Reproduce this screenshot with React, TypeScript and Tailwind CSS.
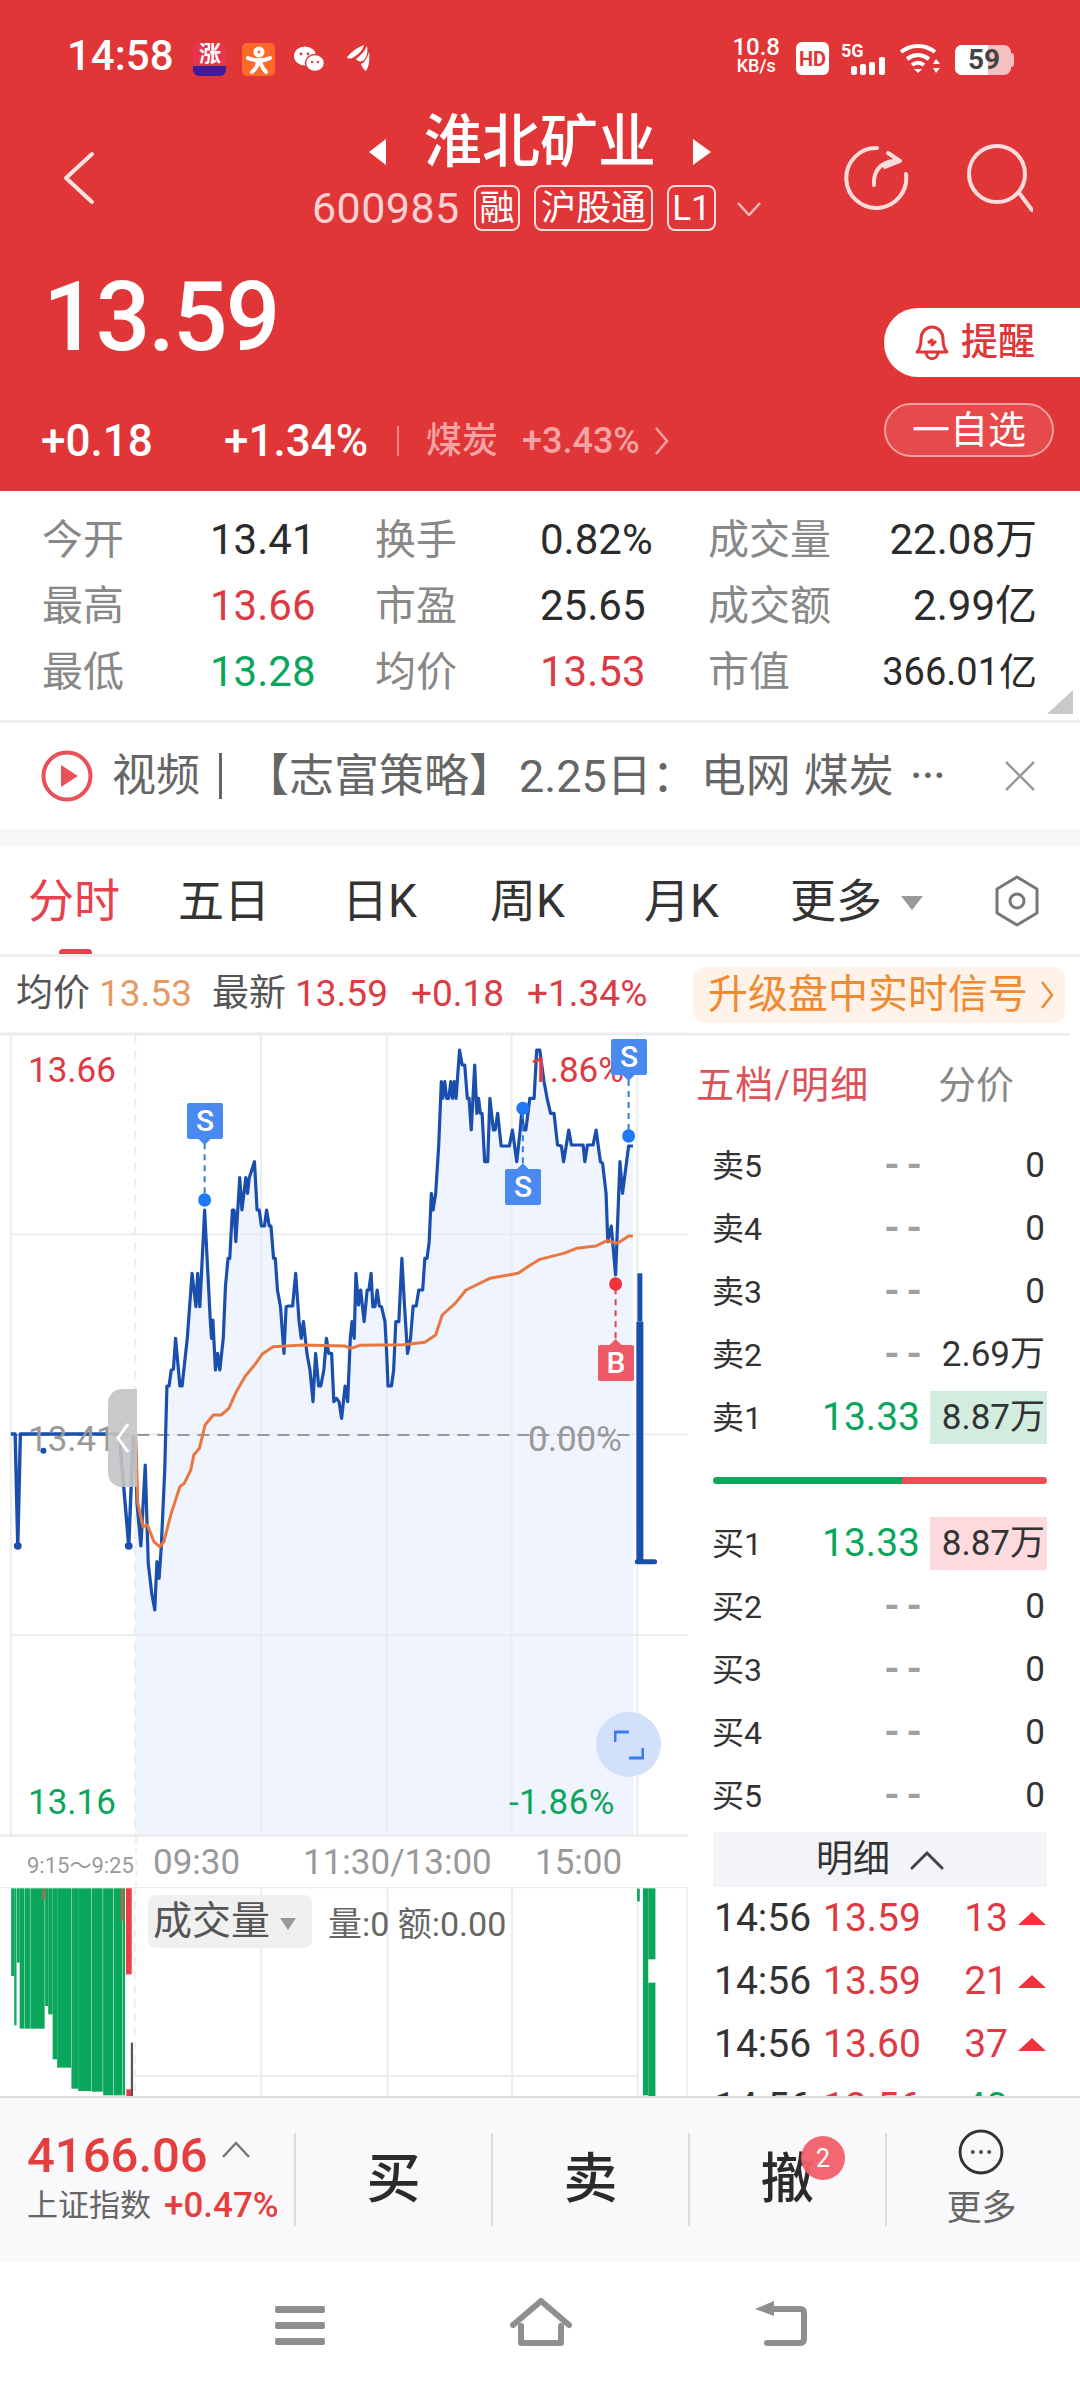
const RED = "text-[#dd3a44]";
const GREEN = "text-[#0aa65c]";

// price and average series, in chart units (1587 x 2412 maps to 688 x 804 px)
const preMarket =
  "25,1212 35,1212 41,1548 47,1212 275,1212 297,1548 303,1355 308,1215";
const pricePoints =
  "312,1215 316,1420 325,1548 335,1305 342,1600 350,1690 357,1740 362,1595 367,1645 372,1550 380,1320 385,1068 390,1068 395,1020 400,1018 405,925 415,1068 420,1068 432,925 443,730 452,830 456,730 461,830 472,540 485,870 488,925 491,870 497,1020 502,970 507,1020 515,925 520,770 526,685 530,685 536,540 540,540 544,635 553,443 558,540 567,443 571,490 575,443 587,395 593,540 598,540 603,588 610,588 615,540 621,588 625,588 631,685 635,685 640,780 647,830 655,970 660,830 665,828 675,828 682,730 690,875 695,925 700,875 708,970 715,1020 722,1115 728,970 735,1068 740,1068 747,1020 753,925 758,970 765,970 770,1115 776,1105 782,1115 788,1165 796,1068 802,1115 808,925 812,875 817,925 821,730 827,825 832,780 840,875 847,780 851,780 856,730 860,830 865,830 870,780 875,828 880,830 888,875 892,970 895,1068 903,1068 908,1020 913,875 920,875 927,685 933,825 940,970 947,925 953,828 960,828 966,780 975,780 980,685 985,685 990,635 995,490 999,540 1005,490 1012,345 1018,155 1021,205 1026,155 1030,205 1035,205 1040,155 1044,205 1048,155 1052,205 1060,60 1066,105 1072,105 1078,205 1082,205 1087,300 1095,105 1100,250 1104,205 1108,250 1112,250 1118,395 1125,395 1130,205 1138,300 1142,300 1148,250 1156,348 1175,348 1182,300 1192,395 1200,300 1203,250 1208,300 1213,300 1222,205 1232,205 1238,60 1245,60 1255,155 1262,205 1270,250 1278,250 1286,345 1295,348 1300,395 1312,300 1318,345 1345,345 1349,395 1355,345 1368,345 1375,300 1385,395 1390,400 1398,490 1402,635 1410,588 1420,735 1430,395 1436,490 1450,348 1460,348";
const avgPoints =
  "313,1215 318,1420 330,1490 340,1485 355,1535 368,1550 378,1535 395,1450 415,1370 425,1360 440,1320 447,1275 460,1255 473,1185 492,1155 510,1155 528,1135 545,1085 565,1040 590,1000 605,972 630,950 700,945 795,948 810,955 830,946 930,944 980,937 1005,915 1020,855 1050,820 1075,780 1130,745 1195,730 1220,708 1245,688 1300,670 1330,655 1375,648 1400,632 1425,640 1450,618 1460,618";

const volumeBars = [
  [25, 32, 410], [32, 37, 558], [38, 44, 370], [44, 55, 568], [56, 67, 568], [68, 100, 568],
  [101, 108, 500], [108, 118, 525], [118, 128, 660], [128, 159, 685], [160, 175, 748],
  [175, 204, 755], [205, 230, 757], [231, 254, 768], [255, 274, 768], [275, 280, 768],
  [1440, 1452, 768], [1452, 1468, 360],
];

const depthSell = [
  { label: "卖5", vol: "0" },
  { label: "卖4", vol: "0" },
  { label: "卖3", vol: "0" },
  { label: "卖2", vol: "2.69万" },
];
const depthBuy = [
  { label: "买2", vol: "0" },
  { label: "买3", vol: "0" },
  { label: "买4", vol: "0" },
  { label: "买5", vol: "0" },
];
const ticks = [
  { time: "14:56", price: "13.59", qty: "13", up: true },
  { time: "14:56", price: "13.59", qty: "21", up: true },
  { time: "14:56", price: "13.60", qty: "37", up: true },
  { time: "14:56", price: "13.56", qty: "40", up: false },
];

const StatusBar = () => (
  <div className="flex h-[110px] items-start pt-[37px] text-white">
    <span className="ml-[67px] w-[126px] text-[42px] leading-[38px] font-medium">14:58</span>
    <div className="relative mt-[6px] h-[33px] w-[33px] overflow-hidden rounded-[6px] bg-[#e8344e]">
      <span className="absolute left-[6px] top-[-2px] text-[22px] leading-[26px] font-bold">涨</span>
      <div className="absolute bottom-0 h-[10px] w-full bg-[#3a1f9a]" />
    </div>
    <div className="mt-[6px] ml-[16px] flex h-[33px] w-[33px] items-center justify-center rounded-[5px] bg-[#ff6a2b]">
      <svg width="26" height="28" viewBox="0 0 26 28" fill="none" stroke="white" strokeWidth="4" strokeLinecap="round">
        <circle cx="13" cy="6" r="3.5" />
        <path d="M2 12c5 3 17 3 22 0M12 14c0 6-2 9-6 12M14 14c1 6 3 9 6 12" />
      </svg>
    </div>
    <svg className="mt-[9px] ml-[18px]" width="32" height="28" viewBox="0 0 32 28" fill="white">
      <ellipse cx="12" cy="10" rx="11" ry="9.5" />
      <ellipse cx="22" cy="17" rx="9.5" ry="8.5" stroke="#e03638" strokeWidth="1.5" />
      <circle cx="8" cy="8" r="1.4" fill="#e03638" />
      <circle cx="15" cy="8" r="1.4" fill="#e03638" />
      <circle cx="19" cy="16" r="1.2" fill="#e03638" />
      <circle cx="25" cy="16" r="1.2" fill="#e03638" />
    </svg>
    <svg className="mt-[5px] ml-[21px]" width="25" height="30" viewBox="0 0 25 30" fill="white">
      <path d="M1 15C6 9 12 5 18 3c-1 5-5 9-10 12-3 2-6 2-7 0z" />
      <path d="M10 17c4-3 8-7 11-13 1 6 0 10-3 14-2 2-6 2-8-1z" />
      <path d="M15 22c3-1 6-5 8-12 1 7 0 14-3 19-2-1-4-4-5-7z" />
    </svg>

    <div className="ml-auto flex flex-col items-center font-medium">
      <span className="text-[24px] leading-[20px]">10.8</span>
      <span className="text-[18px] leading-[18px]">KB/s</span>
    </div>
    <div className="mt-[5px] ml-[16px] flex h-[33px] w-[33px] items-center justify-center rounded-[6px] bg-white text-[20px] font-bold text-[#e03638]">
      HD
    </div>
    <svg className="mt-[5px] ml-[12px]" width="46" height="36" viewBox="0 0 46 36" fill="white">
      <text x="0" y="15" fontSize="18" fontWeight="700" fontFamily="Roboto, sans-serif">5G</text>
      <rect x="10" y="24" width="6" height="9" rx="2" />
      <rect x="19" y="22" width="6" height="11" rx="2" />
      <rect x="28" y="20" width="6" height="13" rx="2" />
      <rect x="38" y="15" width="6" height="18" rx="2" />
    </svg>
    <svg className="mt-[6px] ml-[13px]" width="42" height="32" viewBox="0 0 42 32" fill="none" stroke="white" strokeWidth="4">
      <path d="M1 9c10-8 24-8 34 0M7 16c7-5 15-5 22 0M12 22c4-3 8-3 12 0" />
      <path d="M18 30l-4-4h8z" fill="white" stroke="none" />
      <path d="M36 16l-3 5h7zM36 30l-3-5h7z" fill="white" stroke="none" />
    </svg>
    <div className="relative mt-[8px] ml-[13px] flex h-[30px] w-[56px] overflow-hidden rounded-[7px] bg-[#f6bfc0]">
      <div className="h-full w-[33px] bg-white" />
      <span className="absolute left-[13px] top-[-2px] text-[28px] leading-[34px] font-bold text-[#444]">59</span>
    </div>
    <div className="mt-[16px] mr-[66px] h-[14px] w-[3px] rounded-r bg-[#f6bfc0]" />
  </div>
);

const Tag = ({ children, className = "" }: any) => (
  <div className={`flex h-[46px] items-center justify-center rounded-[8px] border-2 border-[#fbdcdc] text-[35px] leading-none whitespace-nowrap text-white ${className}`}>
    {children}
  </div>
);

const Header = () => (
  <div className="h-[491px] bg-[#e03638] text-white">
    <StatusBar />
    <div className="flex h-[130px] items-start">
      <svg className="mt-[41px] ml-[62px]" width="33" height="54" viewBox="0 0 33 54" fill="none" stroke="#fbe3e3" strokeWidth="4" strokeLinecap="round" strokeLinejoin="round">
        <path d="M30 3 4 27l26 24" />
      </svg>
      <div className="ml-[217px] flex flex-col">
        <div className="mt-[6px] flex h-[52px] items-center pl-[56px]">
          <svg className="mt-[20px]" width="20" height="26" viewBox="0 0 20 26" fill="white"><path d="M18 0v26L1 13z" /></svg>
          <span className="ml-[36px] w-[268px] text-[58px] leading-[52px] font-medium whitespace-nowrap">淮北矿业</span>
          <svg className="mt-[20px]" width="20" height="26" viewBox="0 0 20 26" fill="white"><path d="M1 0v26l18-13z" /></svg>
        </div>
        <div className="mt-[17px] flex items-center">
          <span className="w-[162px] text-[43px] leading-[46px] tracking-[0.01em] text-[#fbd0d0]">600985</span>
          <Tag className="w-[46px]">融</Tag>
          <Tag className="ml-[14px] w-[119px]">沪股通</Tag>
          <Tag className="ml-[14px] w-[49px]">L1</Tag>
          <svg className="mt-[2px] ml-[21px]" width="24" height="14" viewBox="0 0 24 14" fill="none" stroke="#f6b9b9" strokeWidth="2.5"><path d="M1 1l11 12L23 1" /></svg>
        </div>
      </div>
      <svg className="mt-[34px] ml-auto" width="66" height="68" viewBox="0 0 66 68" fill="none" stroke="#fbdcdc" strokeWidth="4" strokeLinecap="round">
        <path d="M34 4a30 30 0 1 0 29 26" />
        <path d="M31 41c-1-13 6-23 20-24M45 9l12 8-15 6" strokeLinejoin="round" />
      </svg>
      <svg className="mt-[34px] mr-[47px] ml-[58px]" width="66" height="68" viewBox="0 0 66 68" fill="none" stroke="#fbdcdc" strokeWidth="4" strokeLinecap="round">
        <circle cx="30" cy="30" r="28" />
        <path d="M53 50l12 16" />
      </svg>
    </div>
    <div className="flex">
      <div className="flex-1">
        <div className="mt-[28px] h-[98px] pl-[43px] text-[96px] leading-[98px] font-medium tracking-[-0.02em]">13.59</div>
        <div className="mt-[53px] flex h-[44px] items-center pl-[41px] text-[44px] leading-none font-medium">
          <span className="w-[183px]">+0.18</span>
          <span className="w-[173px]">+1.34%</span>
          <div className="h-[30px] w-[2px] bg-[#ec8486]" />
          <span className="ml-[27px] w-[96px] text-[36px] text-[#f7a3a3]">煤炭</span>
          <span className="w-[132px] text-[36px] text-[#f7a3a3]">+3.43%</span>
          <svg width="16" height="30" viewBox="0 0 16 30" fill="none" stroke="#f7a3a3" strokeWidth="2.5"><path d="M2 2l11 13L2 28" /></svg>
        </div>
      </div>
      <div className="flex w-[196px] flex-col">
        <div className="mt-[68px] flex h-[69px] items-center rounded-l-[34px] bg-white pl-[30px] text-[37px] font-medium text-[#e03638]">
          <svg width="36" height="38" viewBox="0 0 36 38" fill="none" stroke="#e03638" strokeWidth="3" strokeLinejoin="round">
            <path d="M3 28c3-3 4-6 4-13 0-7 5-12 11-12s11 5 11 12c0 7 1 10 4 13z" />
            <path d="M12 28c0 9 12 9 12 0M14 19l4-3v5l4-4" />
          </svg>
          <span className="ml-[11px]">提醒</span>
        </div>
        <div className="mt-[26px] flex h-[54px] w-[170px] items-center justify-center rounded-[27px] border-2 border-[#f2a0a2] bg-[#e64a4c] text-[38px] leading-none">
          一自选
        </div>
      </div>
    </div>
  </div>
);

const StatsGrid = () => {
  const labelCls = "text-[41px] text-[#888888]";
  const valueCls = "text-[42px] text-[#2b2b2b]";
  return (
    <div className="relative h-[232px] border-b-[3px] border-[#eeeeee] pt-[16px] pl-[42px]">
      <div className="grid grid-cols-[168px_165px_165px_168px_160px_169px] auto-rows-[66px] items-center leading-none">
        <span className={labelCls}>今开</span>
        <span className={valueCls}>13.41</span>
        <span className={labelCls}>换手</span>
        <span className={valueCls}>0.82%</span>
        <span className={`${labelCls} whitespace-nowrap`}>成交量</span>
        <span className={`${valueCls} text-right whitespace-nowrap`}>22.08万</span>
        <span className={labelCls}>最高</span>
        <span className={`text-[42px] ${RED}`}>13.66</span>
        <span className={labelCls}>市盈</span>
        <span className={valueCls}>25.65</span>
        <span className={`${labelCls} whitespace-nowrap`}>成交额</span>
        <span className={`${valueCls} text-right whitespace-nowrap`}>2.99亿</span>
        <span className={labelCls}>最低</span>
        <span className={`text-[42px] ${GREEN}`}>13.28</span>
        <span className={labelCls}>均价</span>
        <span className={`text-[42px] ${RED}`}>13.53</span>
        <span className={labelCls}>市值</span>
        <span className="text-right text-[38px] whitespace-nowrap text-[#2b2b2b]">366.01亿</span>
      </div>
      <div className="absolute right-[7px] bottom-[6px] h-0 w-0 border-b-[24px] border-l-[26px] border-b-[#c9c9c9] border-l-transparent" />
    </div>
  );
};

const NewsTicker = () => (
  <div className="flex h-[106px] items-center pl-[41px] text-[44px] leading-none text-[#666666]">
    <svg width="52" height="52" viewBox="0 0 52 52" fill="none">
      <circle cx="26" cy="26" r="23.5" stroke="#e8505a" strokeWidth="4" />
      <path d="M20 15l17 11-17 11z" fill="#e8505a" />
    </svg>
    <span className="ml-[19px] whitespace-nowrap">视频</span>
    <div className="ml-[19px] h-[46px] w-[3px] bg-[#666666]" />
    <span className="ml-[22px] text-[45px] whitespace-nowrap">【志富策略】</span>
    <span className="ml-[5px] text-[45px] whitespace-nowrap">2.25日：</span>
    <span className="ml-[4px] text-[45px] whitespace-nowrap">电网</span>
    <span className="ml-[13px] text-[45px] whitespace-nowrap">煤炭</span>
    <span className="ml-[17px] text-[36px] font-bold tracking-[0.02em]">···</span>
    <svg className="mr-[45px] ml-auto" width="30" height="30" viewBox="0 0 30 30" fill="none" stroke="#999999" strokeWidth="2.5"><path d="M1 1l28 28M29 1 1 29" /></svg>
  </div>
);

const ChartTabs = () => (
  <div className="relative flex h-[111px] items-start border-b-[3px] border-[#eeeeee] pt-[32px] text-[46px] leading-[46px] text-[#333333]">
    <span className="ml-[28px] w-[150px] text-[#e8404c]">分时</span>
    <span className="w-[164px]">五日</span>
    <span className="w-[148px]">日K</span>
    <span className="w-[154px]">周K</span>
    <span className="w-[146px]">月K</span>
    <span>更多</span>
    <div className="mt-[18px] ml-[19px] h-0 w-0 border-x-[11px] border-t-[14px] border-x-transparent border-t-[#999999]" />
    <svg className="absolute left-[993px] top-[29px]" width="48" height="52" viewBox="0 0 48 52" fill="none" stroke="#777777" strokeWidth="3">
      <path d="M24 2 44 14v24L24 50 4 38V14z" strokeLinejoin="round" />
      <circle cx="24" cy="26" r="7" />
    </svg>
    <div className="absolute left-[59px] bottom-0 h-[5px] w-[33px] rounded-t bg-[#e8404c]" />
  </div>
);

const QuoteBar = () => (
  <div className="flex h-[73px] items-start pl-[16px] text-[37px] leading-none">
    <span className="mt-[18px] text-[#555555]">均价</span>
    <span className="mt-[18px] ml-[9px] w-[113px] text-[#e59a62]">13.53</span>
    <span className="mt-[18px] text-[#555555]">最新</span>
    <span className={`mt-[18px] ml-[9px] w-[116px] ${RED}`}>13.59</span>
    <span className={`mt-[18px] w-[116px] ${RED}`}>+0.18</span>
    <span className={`mt-[18px] w-[166px] ${RED}`}>+1.34%</span>
    <div className="mt-[10px] flex h-[56px] w-[372px] items-center rounded-[12px] bg-[#fff3e9] pl-[15px] text-[40px] text-[#f08a30]">
      <span className="whitespace-nowrap">升级盘中实时信号</span>
      <svg className="ml-[12px]" width="14" height="30" viewBox="0 0 14 30" fill="none" stroke="#f08a30" strokeWidth="2.5"><path d="M2 2l10 13L2 28" /></svg>
    </div>
  </div>
);

const Marker = ({ label, className = "" }: any) => (
  <div className={`absolute flex h-[36px] w-[36px] items-center justify-center text-[30px] leading-none font-medium text-white ${className}`}>
    {label}
  </div>
);

const AxisLabel = ({ children, className = "" }: any) => (
  <span className={`absolute text-[35px] leading-none ${className}`}>{children}</span>
);

const PriceChart = () => (
  <div className="relative h-[804px] w-[688px] overflow-hidden">
    <svg className="absolute inset-0" width="688" height="804" viewBox="0 0 1587 2412" preserveAspectRatio="none" fill="none">
      <polygon points={`${pricePoints} 1462,2412 312,2412 312,1215`} fill="#eff4fe" />
      <g stroke="#ebecf0">
        <line x1="0" y1="12" x2="1587" y2="12" strokeWidth="3" vectorEffect="non-scaling-stroke" />
        <line x1="25" y1="12" x2="25" y2="2412" strokeWidth="2" vectorEffect="non-scaling-stroke" />
        <line x1="25" y1="613" x2="1587" y2="613" strokeWidth="2" vectorEffect="non-scaling-stroke" />
        <line x1="25" y1="1815" x2="1587" y2="1815" strokeWidth="2" vectorEffect="non-scaling-stroke" />
        <line x1="25" y1="1213" x2="1587" y2="1213" strokeWidth="2" vectorEffect="non-scaling-stroke" />
        <line x1="602" y1="12" x2="602" y2="2412" strokeWidth="2" vectorEffect="non-scaling-stroke" />
        <line x1="892" y1="12" x2="892" y2="2412" strokeWidth="2" vectorEffect="non-scaling-stroke" />
        <line x1="1180" y1="12" x2="1180" y2="2412" strokeWidth="2" vectorEffect="non-scaling-stroke" />
        <line x1="1470" y1="12" x2="1470" y2="2412" strokeWidth="2" vectorEffect="non-scaling-stroke" />
        <line x1="312" y1="12" x2="312" y2="2412" strokeWidth="2" strokeDasharray="9 7" vectorEffect="non-scaling-stroke" />
      </g>
      <line x1="40" y1="1215" x2="1462" y2="1215" stroke="#999999" strokeWidth="2" strokeDasharray="12 8" vectorEffect="non-scaling-stroke" />
      <polyline points={preMarket} stroke="#1a4fae" strokeWidth="3.4" strokeLinejoin="round" vectorEffect="non-scaling-stroke" />
      <polyline points={pricePoints} stroke="#1a4fae" strokeWidth="3.2" strokeLinejoin="round" vectorEffect="non-scaling-stroke" />
      <polyline points={avgPoints} stroke="#e9773f" strokeWidth="3" strokeLinejoin="round" vectorEffect="non-scaling-stroke" />
      <polyline points="1476,730 1476,875" stroke="#1a4fae" strokeWidth="5" vectorEffect="non-scaling-stroke" />
      <polyline points="1476,875 1476,1595" stroke="#1a4fae" strokeWidth="7" vectorEffect="non-scaling-stroke" />
      <polyline points="1470,1595 1510,1595" stroke="#1a4fae" strokeWidth="5" strokeLinecap="round" vectorEffect="non-scaling-stroke" />
      <ellipse cx="41" cy="1548" rx="9" ry="11" fill="#1a4fae" />
      <ellipse cx="297" cy="1548" rx="9" ry="11" fill="#1a4fae" />
      <ellipse cx="100" cy="1262" rx="7" ry="9" fill="#1a4fae" />
      <g stroke="#2f7bf0" strokeWidth="2" strokeDasharray="6 5">
        <line x1="472" y1="340" x2="472" y2="500" vectorEffect="non-scaling-stroke" />
        <line x1="1206" y1="250" x2="1206" y2="405" vectorEffect="non-scaling-stroke" />
        <line x1="1450" y1="150" x2="1450" y2="305" vectorEffect="non-scaling-stroke" />
      </g>
      <line x1="1420" y1="775" x2="1420" y2="930" stroke="#e0404c" strokeWidth="2" strokeDasharray="6 5" vectorEffect="non-scaling-stroke" />
      <ellipse cx="472" cy="510" rx="15" ry="20" fill="#1f78f5" />
      <ellipse cx="1206" cy="235" rx="15" ry="20" fill="#1f78f5" />
      <ellipse cx="1450" cy="318" rx="15" ry="20" fill="#1f78f5" />
      <ellipse cx="1420" cy="762" rx="15" ry="20" fill="#f0323c" />
      <polygon points="458,327 486,327 472,345" fill="#4a8af0" />
      <polygon points="1192,418 1220,418 1206,400" fill="#4a8af0" />
      <polygon points="1436,135 1464,135 1450,153" fill="#4a8af0" />
      <polygon points="1406,945 1434,945 1420,927" fill="#ee5a67" />
    </svg>

    <AxisLabel className={`left-[28px] top-[23px] ${RED}`}>13.66</AxisLabel>
    <AxisLabel className={`left-[530px] top-[23px] ${RED}`}>1.86%</AxisLabel>
    <AxisLabel className="left-[28px] top-[392px] text-[#999999]">13.41</AxisLabel>
    <AxisLabel className="left-[528px] top-[392px] text-[#999999]">0.00%</AxisLabel>
    <AxisLabel className={`left-[28px] top-[755px] ${GREEN}`}>13.16</AxisLabel>
    <AxisLabel className={`left-[509px] top-[755px] tracking-[0.01em] ${GREEN}`}>-1.86%</AxisLabel>

    <Marker label="S" className="left-[187px] top-[73px] rounded-[2px] bg-[#4a8af0]" />
    <Marker label="S" className="left-[505px] top-[139px] rounded-[2px] bg-[#4a8af0]" />
    <Marker label="S" className="left-[611px] top-[9px] rounded-[2px] bg-[#4a8af0]" />
    <Marker label="B" className="left-[598px] top-[315px] rounded-[2px] bg-[#ee5a67]" />

    {/* collapse handle for the pre-market section */}
    <div className="absolute left-[108px] top-[359px] flex h-[98px] w-[29px] items-center justify-center rounded-l-[14px] bg-[#c4c4c4]/90">
      <svg width="14" height="32" viewBox="0 0 14 32" fill="none" stroke="white" strokeWidth="3"><path d="M12 2 2 16l10 14" /></svg>
    </div>

    <div className="absolute left-[596px] top-[682px] flex h-[65px] w-[65px] items-center justify-center rounded-full bg-[#d3e0fa]">
      <svg width="30" height="30" viewBox="0 0 30 30" fill="none" stroke="#3b7bf0" strokeWidth="3">
        <path d="M1 12V2h14M29 18v10H15" />
      </svg>
    </div>
  </div>
);

const TimeAxis = () => (
  <div className="relative h-[53px] w-[688px] border-t-[3px] border-[#eeeeee] text-[#999999]">
    <div className="absolute left-[135px] top-0 h-full border-l-2 border-dashed border-[#eeeeee]" />
    <span className="absolute left-[27px] top-[18px] text-[22px] leading-none whitespace-nowrap">9:15～9:25</span>
    <span className="absolute left-[153px] top-[8px] text-[35px] leading-none">09:30</span>
    <span className="absolute left-[303px] top-[8px] text-[35px] leading-none whitespace-nowrap">11:30/13:00</span>
    <span className="absolute left-[535px] top-[8px] text-[35px] leading-none">15:00</span>
  </div>
);

const VolumePanel = () => (
  <div className="relative h-[209px] w-[688px] overflow-hidden">
    <svg className="absolute inset-0" width="688" height="209" viewBox="0 143 1541 627" preserveAspectRatio="none">
      <g stroke="#ebecf0" strokeWidth="2">
        <line x1="0" y1="144" x2="1541" y2="144" vectorEffect="non-scaling-stroke" />
        <line x1="585" y1="144" x2="585" y2="770" vectorEffect="non-scaling-stroke" />
        <line x1="868" y1="144" x2="868" y2="770" vectorEffect="non-scaling-stroke" />
        <line x1="1147" y1="144" x2="1147" y2="770" vectorEffect="non-scaling-stroke" />
        <line x1="1428" y1="144" x2="1428" y2="770" vectorEffect="non-scaling-stroke" />
        <line x1="1540" y1="144" x2="1540" y2="770" vectorEffect="non-scaling-stroke" />
        <line x1="302" y1="710" x2="1428" y2="710" vectorEffect="non-scaling-stroke" />
        <line x1="302" y1="144" x2="302" y2="770" strokeDasharray="8 6" vectorEffect="non-scaling-stroke" />
      </g>
      {volumeBars.map(([x1, x2, y2]) => (
        <rect key={x1} x={x1} y={147} width={x2 - x1} height={y2 - 147} fill="#0aa65c" />
      ))}
      <rect x="1452" y="430" width="16" height="340" fill="#0aa65c" />
      <rect x="1427" y="148" width="6" height="38" fill="#0aa65c" />
      <rect x="94" y="148" width="8" height="32" fill="#8c7a52" />
      <rect x="270" y="148" width="8" height="97" fill="#8c7a52" />
      <rect x="282" y="147" width="13" height="258" fill="#ef3b45" />
      <rect x="283" y="750" width="14" height="20" fill="#ef3b45" />
      <rect x="293" y="610" width="5" height="160" fill="#555555" />
    </svg>
    <div className="absolute left-[148px] top-[8px] flex h-[53px] w-[164px] items-center rounded-[8px] bg-[#f0f0f0] pl-[5px] text-[39px] leading-none text-[#555555]">
      <span className="whitespace-nowrap">成交量</span>
      <div className="mt-[5px] ml-[10px] h-0 w-0 border-x-[8px] border-t-[12px] border-x-transparent border-t-[#999999]" />
    </div>
    <span className="absolute left-[328px] top-[20px] text-[34px] leading-none whitespace-nowrap text-[#666666]">量:0 额:0.00</span>
  </div>
);

const DepthRow = ({ label, price, vol, priceCls = GREEN, volBg = "" }: any) => (
  <div className="flex h-[63px] items-center pl-[24px] text-[#333333]">
    <span className="w-[103px] text-[32px] leading-none">{label}</span>
    <span className={`w-[105px] text-right text-[39px] leading-none whitespace-nowrap ${priceCls}`}>{price}</span>
    <div className={`ml-[10px] flex h-[53px] w-[117px] items-center justify-end pr-[2px] text-[35px] leading-none ${volBg}`}>
      {vol}
    </div>
  </div>
);

const EmptyPrice = "--";
const emptyPriceCls = "relative left-[9px] font-bold tracking-[0.18em] text-[#a0a0a0]";

const DepthPanel = () => (
  <div className="h-[1066px] w-[392px] overflow-hidden">
    <div className="mt-[3px] h-[3px] w-[382px] bg-[#eeeeee]" />
    <div className="flex h-[98px] items-center pl-[8px] text-[38px] leading-none">
      <span className="w-[242px] tracking-[0.03em] whitespace-nowrap text-[#dd5158]">五档/明细</span>
      <span className="text-[#888888]">分价</span>
    </div>
    {depthSell.map((row) => (
      <DepthRow key={row.label} label={row.label} vol={row.vol} price={EmptyPrice} priceCls={emptyPriceCls} />
    ))}
    <DepthRow label="卖1" price="13.33" vol="8.87万" volBg="bg-[#d2ece0]" />
    <div className="mt-[28px] ml-[25px] flex h-[7px] w-[334px] overflow-hidden rounded-full">
      <div className="h-full w-[189px] bg-[#0aa65c]" />
      <div className="h-full flex-1 bg-[#f24d52]" />
    </div>
    <div className="mt-[28px]">
      <DepthRow label="买1" price="13.33" vol="8.87万" volBg="bg-[#fcdadd]" />
      {depthBuy.map((row) => (
        <DepthRow key={row.label} label={row.label} vol={row.vol} price={EmptyPrice} priceCls={emptyPriceCls} />
      ))}
    </div>
    <div className="mt-[5px] ml-[25px] flex h-[55px] w-[334px] items-center justify-center gap-[20px] bg-[#f3f4f8] text-[37px] leading-none text-[#333333]">
      <span>明细</span>
      <svg width="34" height="20" viewBox="0 0 34 20" fill="none" stroke="#444444" strokeWidth="3" strokeLinecap="round"><path d="M2 18 17 3l15 15" /></svg>
    </div>
    {ticks.map((row, i) => (
      <div key={i} className="flex h-[63px] items-center pl-[26px] text-[39px] leading-none">
        <span className="w-[109px] text-[#333333]">{row.time}</span>
        <span className={`w-[97px] ${RED}`}>{row.price}</span>
        <span className={`w-[88px] text-right ${row.up ? RED : GREEN}`}>{row.qty}</span>
        <div className="ml-[10px] h-0 w-0 border-x-[14px] border-b-[13px] border-x-transparent border-b-[#f0333d]" />
      </div>
    ))}
  </div>
);

const Trade = ({ children }: any) => (
  <div className="flex h-[93px] w-[197px] items-center justify-center border-l-2 border-[#dddddd] text-[54px] leading-none font-medium text-[#2b2b2b]">
    {children}
  </div>
);

const BottomBar = () => (
  <div className="relative z-10 flex h-[166px] items-start border-t-2 border-[#dddddd] bg-[#f9f9fb] pt-[35px]">
    <div className="w-[294px] pl-[27px]">
      <div className="flex h-[44px] items-center">
        <span className="text-[49px] leading-none font-medium text-[#e53e3e]">4166.06</span>
        <svg className="mt-[-12px] ml-[14px]" width="28" height="17" viewBox="0 0 28 17" fill="none" stroke="#777777" strokeWidth="2.5"><path d="M1 16 14 2l13 14" /></svg>
      </div>
      <div className="mt-[11px] flex items-center">
        <span className="w-[137px] text-[31px] leading-none whitespace-nowrap text-[#666666]">上证指数</span>
        <span className="text-[35px] leading-none font-medium text-[#e53e3e]">+0.47%</span>
      </div>
    </div>
    <Trade>买</Trade>
    <Trade>卖</Trade>
    <div className="relative">
      <Trade>撤</Trade>
      <div className="absolute left-[113px] top-[3px] flex h-[44px] w-[44px] items-center justify-center rounded-full bg-[#f25f6a]/95 text-[25px] leading-none text-white">2</div>
    </div>
    <div className="flex h-[93px] flex-1 flex-col items-center border-l-2 border-[#dddddd]">
      <svg className="mt-[-4px] ml-[-6px]" width="56" height="56" viewBox="0 0 56 56" fill="none">
        <circle cx="28" cy="28" r="25.5" stroke="#333333" strokeWidth="3.5" />
        <circle cx="18" cy="28" r="2.5" fill="#555555" />
        <circle cx="28" cy="28" r="2.5" fill="#555555" />
        <circle cx="38" cy="28" r="2.5" fill="#555555" />
      </svg>
      <span className="mt-[16px] ml-[-4px] text-[35px] leading-none text-[#666666]">更多</span>
    </div>
  </div>
);

const NavBar = () => (
  <div className="flex h-[126px] items-start bg-white pt-[36px]">
    <svg className="ml-[275px]" width="50" height="48" viewBox="0 0 50 48" fill="#8f8f8f">
      <rect x="0" y="8" width="50" height="7" rx="2" />
      <rect x="0" y="24" width="50" height="7" rx="2" />
      <rect x="0" y="40" width="50" height="7" rx="2" />
    </svg>
    <svg className="ml-[185px]" width="62" height="50" viewBox="0 0 62 50" fill="none" stroke="#8f8f8f" strokeWidth="6" strokeLinecap="round" strokeLinejoin="round">
      <path d="M3 27 31 3l28 24" />
      <path d="M11 28v17h40V28" />
    </svg>
    <svg className="ml-[182px]" width="54" height="50" viewBox="0 0 54 50" fill="none">
      <path d="M16 11h30q4 0 4 4v26q0 4-4 4H13" stroke="#8f8f8f" strokeWidth="6" strokeLinecap="round" />
      <path d="M1 11 20 3v15z" fill="#8f8f8f" />
    </svg>
  </div>
);

export default function App() {
  return (
    <div className="flex h-[2388px] w-[1080px] flex-col overflow-hidden bg-white [font-family:Roboto,'Noto_Sans_CJK_SC',sans-serif]">
      <Header />
      <StatsGrid />
      <NewsTicker />
      <div className="h-[17px] bg-[#f7f7f7]" />
      <ChartTabs />
      <QuoteBar />
      <div className="flex h-[1066px] overflow-hidden">
        <div className="flex w-[688px] flex-col">
          <PriceChart />
          <TimeAxis />
          <VolumePanel />
        </div>
        <DepthPanel />
      </div>
      <BottomBar />
      <NavBar />
    </div>
  );
}
